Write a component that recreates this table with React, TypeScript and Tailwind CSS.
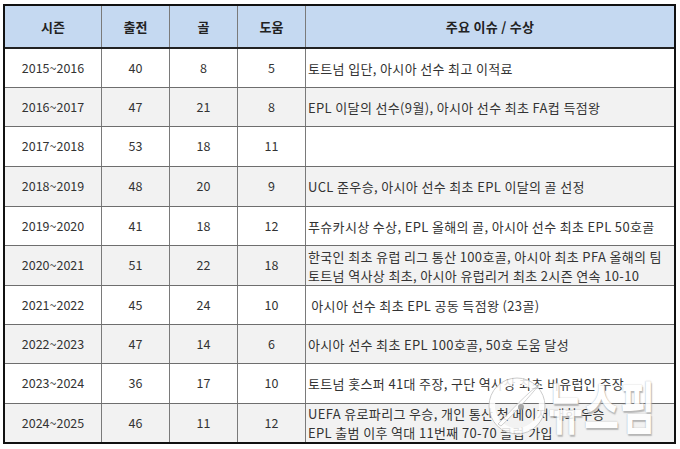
import React from 'react';

// 손흥민 시즌별 기록 표

const ROWS = [
  { season: '2015~2016', apps: '40', goals: '8', assists: '5', note: ['토트넘 입단, 아시아 선수 최고 이적료'], h: 'h-[39px]' },
  { season: '2016~2017', apps: '47', goals: '21', assists: '8', note: ['EPL 이달의 선수(9월), 아시아 선수 최초 FA컵 득점왕'], h: 'h-[39px]' },
  { season: '2017~2018', apps: '53', goals: '18', assists: '11', note: [], h: 'h-[40px]' },
  { season: '2018~2019', apps: '48', goals: '20', assists: '9', note: ['UCL 준우승, 아시아 선수 최초 EPL 이달의 골 선정'], h: 'h-[40px]' },
  { season: '2019~2020', apps: '41', goals: '18', assists: '12', note: ['푸슈카시상 수상, EPL 올해의 골, 아시아 선수 최초 EPL 50호골'], h: 'h-[39px]' },
  {
    season: '2020~2021', apps: '51', goals: '22', assists: '18',
    note: ['한국인 최초 유럽 리그 통산 100호골, 아시아 최초 PFA 올해의 팀', '토트넘 역사상 최초, 아시아 유럽리거 최초 2시즌 연속 10-10'],
    h: 'h-[40px]',
  },
  { season: '2021~2022', apps: '45', goals: '24', assists: '10', note: ['\u00a0아시아 선수 최초 EPL 공동 득점왕 (23골)'], h: 'h-[39px]' },
  { season: '2022~2023', apps: '47', goals: '14', assists: '6', note: ['아시아 선수 최초 EPL 100호골, 50호 도움 달성'], h: 'h-[39px]' },
  { season: '2023~2024', apps: '36', goals: '17', assists: '10', note: ['토트넘 홋스퍼 41대 주장, 구단 역사상 최초 비유럽인 주장'], h: 'h-[40px]' },
  {
    season: '2024~2025', apps: '46', goals: '11', assists: '12',
    note: ['UEFA 유로파리그 우승, 개인 통산 첫 메이저 대회 우승', 'EPL 출범 이후 역대 11번째 70-70 클럽 가입'],
    h: 'h-[38px]',
  },
];

const FONT = { fontFamily: '"Noto Sans CJK KR", "Noto Sans", sans-serif' };

export default function App() {
  return (
    <div className="w-[680px] h-[449px] bg-white relative overflow-hidden" style={FONT}>
      <div className="ml-[3px] mt-[4px] w-[673px] border-2 border-[#111] text-[13px] text-[#333]">
        {/* Header */}
        <div className="flex h-[43px] bg-[#c5d9f1] border-b-2 border-[#222] font-bold text-[#222]">
          <div className="w-[97px] border-r border-[#7a7a7a] flex items-center justify-center">시즌</div>
          <div className="w-[68px] border-r border-[#7a7a7a] flex items-center justify-center">출전</div>
          <div className="w-[68px] border-r border-[#7a7a7a] flex items-center justify-center">골</div>
          <div className="w-[68px] border-r border-[#7a7a7a] flex items-center justify-center">도움</div>
          <div className="flex-1 flex items-center justify-center tracking-[0.3px]">주요 이슈 / 수상</div>
        </div>

        {/* Body */}
        {ROWS.map((r, i) => (
          <div
            key={r.season}
            className={`flex ${r.h} ${i % 2 === 1 ? 'bg-[#f2f2f2]' : 'bg-white'} ${i < ROWS.length - 1 ? 'border-b border-[#6e6e6e]' : ''}`}
          >
            <div className="w-[97px] border-r border-[#7a7a7a] flex items-center justify-center text-[12.5px]">{r.season}</div>
            <div className="w-[68px] border-r border-[#7a7a7a] flex items-center justify-center text-[12.5px]">{r.apps}</div>
            <div className="w-[68px] border-r border-[#7a7a7a] flex items-center justify-center text-[12.5px]">{r.goals}</div>
            <div className="w-[68px] border-r border-[#7a7a7a] flex items-center justify-center text-[12.5px]">{r.assists}</div>
            <div className="flex-1 flex flex-col justify-center pl-[2px] leading-[19px] whitespace-nowrap tracking-[0.35px]">
              {r.note.map((n) => (
                <div key={n}>{n}</div>
              ))}
            </div>
          </div>
        ))}
      </div>

      {/* 뉴스핌 watermark */}
      <div className="absolute left-[488px] top-[370px] flex items-center gap-[2px] opacity-85 pointer-events-none">
        <svg width="58" height="70" viewBox="0 0 58 70">
          <circle cx="29" cy="36" r="25" fill="none" stroke="#fff" strokeWidth="6" />
          <circle cx="29" cy="36" r="28" fill="none" stroke="#c4c4c4" strokeWidth="1" />
          <path d="M10 54 C24 40 38 24 52 14 C40 28 28 42 13 56 Z" fill="#fff" stroke="#bdbdbd" strokeWidth="0.8" />
          <circle cx="33" cy="37" r="3" fill="#999" />
        </svg>
        <span
          className="block text-[38px] font-bold text-white leading-none tracking-[1px] origin-left scale-y-[1.5]"
          style={{ ...FONT, textShadow: '0 0 1px #9a9a9a, 1px 1px 1px #b0b0b0' }}
        >
          뉴스핌
        </span>
      </div>
    </div>
  );
}
